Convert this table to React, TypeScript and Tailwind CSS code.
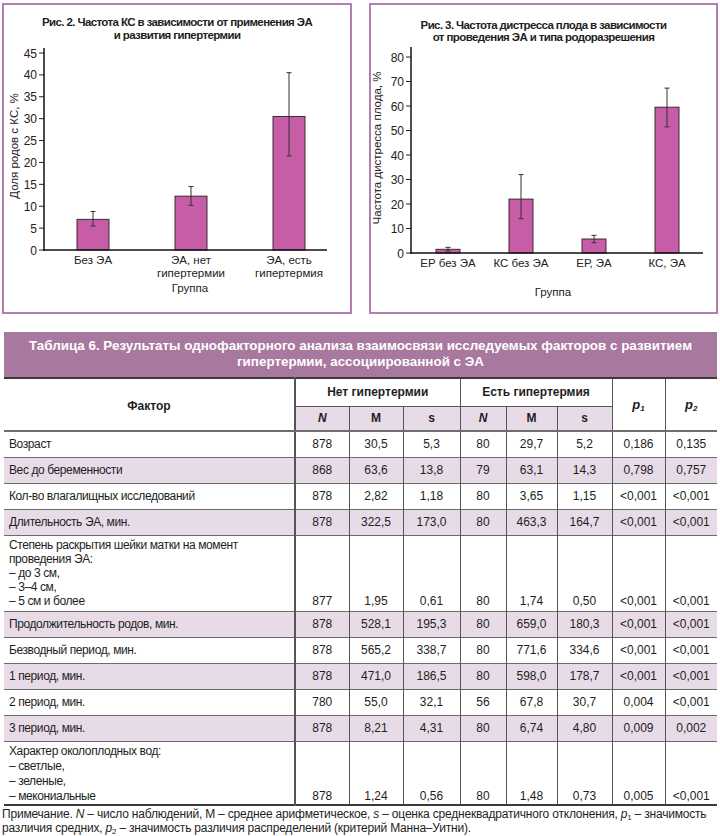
import React from 'react'

type Bar = { cx: number; v: number; lo: number; hi: number; label: string[] }

type ChartProps = {
  w: number
  h: number
  zeroY: number
  topY: number
  axisTop: number
  axisRight: number
  max: number
  step: number
  bw: number
  bars: Bar[]
  labelY: number
  yLabel: string
  yLabelX: number
  yLabelY: number
  groupX: number
  groupY: number
}

// simple bar chart with error bars
function BarChart(p: ChartProps) {
  const k = (p.zeroY - p.topY) / p.max
  const y = (v: number) => p.zeroY - v * k
  const ticks: number[] = []
  for (let t = 0; t <= p.max; t += p.step) ticks.push(t)
  return (
    <svg width={p.w} height={p.h} className="block">
      {ticks.map(t => (
        <g key={t}>
          <line x1={35} x2={40} y1={y(t)} y2={y(t)} stroke="#222" strokeWidth={1} />
          <text x={33} y={y(t) + 4.5} textAnchor="end" fontSize={12} fill="#222">
            {t}
          </text>
        </g>
      ))}
      {p.bars.map((b, i) => (
        <g key={i}>
          <rect
            x={b.cx - p.bw / 2}
            y={y(b.v)}
            width={p.bw}
            height={p.zeroY - y(b.v)}
            fill="#c65da6"
            stroke="#3a2a35"
            strokeWidth={1}
          />
          <line x1={b.cx} x2={b.cx} y1={y(b.hi)} y2={y(b.lo)} stroke="#333" strokeWidth={1} />
          <line x1={b.cx - 2.5} x2={b.cx + 2.5} y1={y(b.hi)} y2={y(b.hi)} stroke="#333" strokeWidth={1} />
          <line x1={b.cx - 2.5} x2={b.cx + 2.5} y1={y(b.lo)} y2={y(b.lo)} stroke="#333" strokeWidth={1} />
          {b.label.map((l, j) => (
            <text key={j} x={b.cx} y={p.labelY + j * 13} textAnchor="middle" fontSize={11.5} fill="#222">
              {l}
            </text>
          ))}
        </g>
      ))}
      <line x1={40} x2={40} y1={p.axisTop} y2={p.zeroY + 0.75} stroke="#111" strokeWidth={1.5} />
      <line x1={39.25} x2={p.axisRight} y1={p.zeroY} y2={p.zeroY} stroke="#111" strokeWidth={1.5} />
      <text x={p.groupX} y={p.groupY} textAnchor="middle" fontSize={11.5} fill="#222">
        Группа
      </text>
      <text
        x={p.yLabelX}
        y={p.yLabelY}
        textAnchor="middle"
        fontSize={11.5}
        fill="#222"
        transform={`rotate(-90 ${p.yLabelX} ${p.yLabelY})`}
      >
        {p.yLabel}
      </text>
    </svg>
  )
}

const rows: { f: string[]; v: string[]; shade?: boolean; h: string }[] = [
  { f: ['Возраст'], v: ['878', '30,5', '5,3', '80', '29,7', '5,2', '0,186', '0,135'], h: 'h-[26px]' },
  { f: ['Вес до беременности'], v: ['868', '63,6', '13,8', '79', '63,1', '14,3', '0,798', '0,757'], shade: true, h: 'h-[26px]' },
  { f: ['Кол-во влагалищных исследований'], v: ['878', '2,82', '1,18', '80', '3,65', '1,15', '<0,001', '<0,001'], h: 'h-[26px]' },
  { f: ['Длительность ЭА, мин.'], v: ['878', '322,5', '173,0', '80', '463,3', '164,7', '<0,001', '<0,001'], shade: true, h: 'h-[26px]' },
  {
    f: ['Степень раскрытия шейки матки на момент', 'проведения ЭА:', '– до 3 см,', '– 3–4 см,', '– 5 см и более'],
    v: ['877', '1,95', '0,61', '80', '1,74', '0,50', '<0,001', '<0,001'],
    h: 'h-[76px]',
  },
  { f: ['Продолжительность родов, мин.'], v: ['878', '528,1', '195,3', '80', '659,0', '180,3', '<0,001', '<0,001'], shade: true, h: 'h-[26px]' },
  { f: ['Безводный период, мин.'], v: ['878', '565,2', '338,7', '80', '771,6', '334,6', '<0,001', '<0,001'], h: 'h-[26px]' },
  { f: ['1 период, мин.'], v: ['878', '471,0', '186,5', '80', '598,0', '178,7', '<0,001', '<0,001'], shade: true, h: 'h-[26px]' },
  { f: ['2 период, мин.'], v: ['780', '55,0', '32,1', '56', '67,8', '30,7', '0,004', '<0,001'], h: 'h-[26px]' },
  { f: ['3 период, мин.'], v: ['878', '8,21', '4,31', '80', '6,74', '4,80', '0,009', '0,002'], shade: true, h: 'h-[26px]' },
  {
    f: ['Характер околоплодных вод:', '– светлые,', '– зеленые,', '– мекониальные'],
    v: ['878', '1,24', '0,56', '80', '1,48', '0,73', '0,005', '<0,001'],
    h: 'h-[61px]',
  },
]

export default function App() {
  return (
    <div className="w-[720px] h-[836px] bg-white text-[#1e1e1e] font-['Liberation_Sans',Arial,sans-serif] overflow-hidden">
      {/* Figures */}
      <div className="flex pt-[3px] pl-[2px] gap-[17px]">
        <div className="w-[350px] h-[311px] border-2 border-[#b67db2]">
          <div className="pt-[11px] text-center text-[11.5px] leading-[13px] font-bold tracking-[-0.6px] h-[35px]">
            Рис. 2. Частота КС в зависимости от применения ЭА
            <br />
            и развития гипертермии
          </div>
          <BarChart
            w={346}
            h={272}
            zeroY={210}
            topY={13}
            axisTop={8}
            axisRight={323}
            max={45}
            step={5}
            bw={32}
            bars={[
              { cx: 89, v: 7, lo: 5.5, hi: 8.8, label: ['Без ЭА'] },
              { cx: 187, v: 12.3, lo: 10.2, hi: 14.5, label: ['ЭА, нет', 'гипертермии'] },
              { cx: 285, v: 30.5, lo: 21.5, hi: 40.5, label: ['ЭА, есть', 'гипертермия'] },
            ]}
            labelY={224}
            yLabel="Доля родов с КС, %"
            yLabelX={14}
            yLabelY={106}
            groupX={186}
            groupY={252}
          />
        </div>
        <div className="w-[349px] h-[311px] border-2 border-[#b67db2]">
          <div className="pt-[14px] text-center text-[11.5px] leading-[12px] font-bold tracking-[-0.6px] h-[37px]">
            Рис. 3. Частота дистресса плода в зависимости
            <br />
            от проведения ЭА и типа родоразрешения
          </div>
          <BarChart
            w={345}
            h={270}
            zeroY={211}
            topY={15}
            axisTop={5}
            axisRight={332}
            max={80}
            step={10}
            bw={24}
            bars={[
              { cx: 77, v: 1.5, lo: 0.8, hi: 2.3, label: ['ЕР без ЭА'] },
              { cx: 150, v: 22, lo: 14, hi: 32, label: ['КС без ЭА'] },
              { cx: 223, v: 5.7, lo: 4.2, hi: 7.2, label: ['ЕР, ЭА'] },
              { cx: 296, v: 59.5, lo: 51.5, hi: 67.3, label: ['КС, ЭА'] },
            ]}
            labelY={225}
            yLabel="Частота дистресса плода, %"
            yLabelX={10}
            yLabelY={106}
            groupX={182}
            groupY={254}
          />
        </div>
      </div>

      {/* Table */}
      <div className="ml-[4px] mt-[18px] w-[713px]">
        <div className="h-[45px] bg-[#a9789f] text-white font-bold text-[13.4px] leading-[16px] text-center pt-[6px]">
          Таблица 6. Результаты однофакторного анализа взаимосвязи исследуемых факторов с развитием
          <br />
          гипертермии, ассоциированной с ЭА
        </div>
        <table className="w-[713px] table-fixed border-collapse text-[12px] leading-[14px]">
          <colgroup>
            <col className="w-[291px]" />
            <col className="w-[54px]" />
            <col className="w-[54px]" />
            <col className="w-[57px]" />
            <col className="w-[46px]" />
            <col className="w-[51px]" />
            <col className="w-[55px]" />
            <col className="w-[53px]" />
            <col className="w-[52px]" />
          </colgroup>
          <thead>
            <tr className="h-[28px] border-t-2 border-[#3a3a3a]">
              <th rowSpan={2} className="font-bold border-r-2 border-r-[#555] border-b-2 border-b-[#6e6e6e] pt-[2px]">
                Фактор
              </th>
              <th colSpan={3} className="font-bold border-r border-[#555]">
                Нет гипертермии
              </th>
              <th colSpan={3} className="font-bold border-r border-[#555]">
                Есть гипертермия
              </th>
              <th rowSpan={2} className="font-bold italic border-r border-[#555] border-b-2 border-b-[#6e6e6e] text-[13px]">
                p<sub className="text-[8px]">1</sub>
              </th>
              <th rowSpan={2} className="font-bold italic border-b-2 border-b-[#6e6e6e] text-[13px]">
                p<sub className="text-[8px]">2</sub>
              </th>
            </tr>
            <tr className="h-[25px] border-b-2 border-[#6e6e6e]">
              {['N', 'M', 's', 'N', 'M', 's'].map((t, i) => (
                <th
                  key={i}
                  className={`bg-[#e7dbe7] border-t border-t-[#555] border-r border-r-[#555] font-bold ${t === 'N' ? 'italic' : ''}`}
                >
                  {t}
                </th>
              ))}
            </tr>
          </thead>
          <tbody>
            {rows.map((r, i) => {
              const multi = r.f.length > 1
              const last = i === rows.length - 1
              return (
                <tr
                  key={i}
                  className={`${r.h} ${r.shade ? 'bg-[#e7dbe7]' : ''} ${last ? 'border-b-2 border-[#3a3a3a]' : 'border-b border-[#6b6b6b]'}`}
                >
                  <td className={`pl-[5px] tracking-[-0.4px] border-r-2 border-r-[#555] ${multi ? 'align-top pt-[2px]' : ''}`}>
                    {r.f.map((l, j) => (
                      <div key={j} className={last ? 'leading-[15px]' : ''}>
                        {l}
                      </div>
                    ))}
                  </td>
                  {r.v.map((v, j) => (
                    <td
                      key={j}
                      className={`text-center ${j < 7 ? 'border-r border-r-[#555]' : ''} ${multi ? (last ? 'align-bottom pb-[1px]' : 'align-bottom pb-[3px]') : ''}`}
                    >
                      {v}
                    </td>
                  ))}
                </tr>
              )
            })}
          </tbody>
        </table>
        <div className="-ml-[2px] pt-[1px] text-[12px] leading-[14px] tracking-[-0.2px]">
          Примечание. <i>N</i> – число наблюдений, М – среднее арифметическое, <i>s</i> – оценка среднеквадратичного
          отклонения, <i>p</i>
          <sub className="text-[8px]">1</sub> – значимость
          <br />
          различия средних, <i>p</i>
          <sub className="text-[8px]">2</sub> – значимость различия распределений (критерий Манна–Уитни).
        </div>
      </div>
    </div>
  )
}
